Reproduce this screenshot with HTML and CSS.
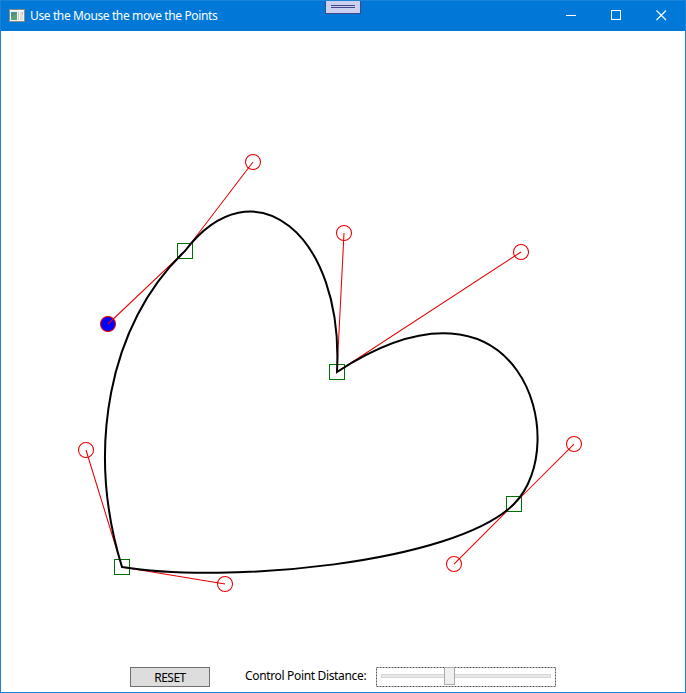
FILE: index.html
```
<!DOCTYPE html>
<html lang="en">
<head>
<meta charset="utf-8">
<title>Use the Mouse the move the Points</title>
<link rel="stylesheet" href="styles.css">
</head>
<body>
<div class="window">
  <header class="titlebar">
    <svg class="app-icon" width="16" height="14" viewBox="0 0 16 14">
      <rect x="0.5" y="1.5" width="15" height="12" fill="#f4f3ef" stroke="#8e8a86"/>
      <path d="M1 2.5H15" stroke="#fff"/>
      <rect x="2" y="4" width="6" height="8" fill="#4b9187"/>
      <path d="M2 9L8 5V12H2Z" fill="#5f9f74"/>
      <path d="M9.5 4V12" stroke="#c9c9c9"/>
      <rect x="11" y="4" width="3" height="8" fill="#deddd9"/>
      <rect x="13" y="4" width="1" height="2" fill="#b8b8b8"/>
    </svg>
    <span class="title">Use the Mouse the move the Points</span>
    <div class="debug-handle"><i></i><i></i></div>
    <div class="controls">
      <svg width="45" height="30"><path d="M16 14.5H26" stroke="#fff" fill="none"/></svg>
      <svg width="45" height="30"><rect x="16.5" y="9.5" width="9" height="9" stroke="#fff" fill="none"/></svg>
      <svg width="45" height="30"><path d="M16.5 9.5L26 19M26 9.5L16.5 19" stroke="#fff" stroke-width="1.1" fill="none"/></svg>
    </div>
  </header>
  <main class="canvas">
    <svg class="drawing" width="684" height="630" viewBox="1 31 684 630">
      <g class="anchors">
        <rect x="177.5" y="243.5" width="15" height="15"/>
        <rect x="329.5" y="364.5" width="15" height="15"/>
        <rect x="506.5" y="496.5" width="15" height="15"/>
        <rect x="114.5" y="559.5" width="15" height="15"/>
      </g>
      <g class="handles">
        <circle cx="253" cy="162" r="7.5"/>
        <circle cx="344" cy="233" r="7.5"/>
        <circle cx="521" cy="252" r="7.5"/>
        <circle cx="574" cy="444" r="7.5"/>
        <circle cx="454" cy="564" r="7.5"/>
        <circle cx="225" cy="584" r="7.5"/>
        <circle cx="86" cy="450" r="7.5"/>
        <circle class="active" cx="108" cy="324" r="7.5"/>
        <path d="M108 324L185 251L253 162"/>
        <path d="M344 233L337 372L521 252"/>
        <path d="M574 444.1L514 504L454 564.1"/>
        <path d="M225 584L122 567L86 450"/>
      </g>
      <path class="curve" d="M185 251C253 162 344 233 337 372C521 252 574 444 514 504C454 564 225 584 122 567C86 450 108 324 185 251Z"/>
    </svg>
    <div class="toolbar">
      <button class="reset">RESET</button>
      <span class="label">Control Point Distance:</span>
      <div class="slider">
        <svg width="180" height="20">
          <rect class="focus" x="0.5" y="0.5" width="179" height="19"/>
          <rect x="5.5" y="7.5" width="169" height="3" fill="#e7eaea" stroke="#d6d6d6"/>
          <rect x="68.5" y="0.5" width="10" height="17" fill="#f0f0f0" stroke="#acacac"/>
        </svg>
      </div>
    </div>
  </main>
</div>
</body>
</html>
```

FILE: styles.css
```
* { box-sizing: border-box; }
body { margin: 0; background: #fff; font-family: "Noto Sans", "Open Sans", sans-serif; font-size: 12px; }
svg { display: block; }
.window { width: 686px; height: 693px; border: 1px solid #1883d7; overflow: hidden; display: flex; flex-direction: column; }
.titlebar { position: relative; height: 30px; flex: none; background: #0078d7; display: flex; align-items: center; padding-left: 8px; color: #fff; }
.app-icon { margin-top: -2px; }
.title { margin-left: 5px; font-size: 12px; line-height: 16px; letter-spacing: -0.38px; white-space: nowrap; }
.controls { margin-left: auto; display: flex; }
.debug-handle { position: absolute; left: 324px; top: -1px; width: 36px; height: 14px; border: 1px solid #3f4885; background: #ccd0f0; display: flex; flex-direction: column; align-items: center; gap: 1px; padding-top: 4px; }
.debug-handle i { width: 24px; height: 1px; background: #3f4885; }
.canvas { flex: 1; display: flex; flex-direction: column; }
.drawing { flex: none; }
.drawing g { fill: none; stroke-width: 1; }
.anchors { stroke: #007000; }
.drawing .handles { stroke: #e60000; stroke-width: 1.05; }
.active { fill: #00f; }
.curve { fill: none; stroke: #000; stroke-width: 2; }
.toolbar { display: flex; align-items: flex-start; padding: 6px 0 0 129px; }
.reset { width: 80px; height: 20px; padding: 1px 0 0; border: 1px solid #707070; background: #ddd; color: #000; font-family: inherit; font-size: 12px; line-height: 18px; letter-spacing: -0.5px; }
.label { width: 131px; margin-left: 35px; line-height: 17px; letter-spacing: -0.34px; white-space: nowrap; }
.slider { width: 180px; height: 20px; }
.focus { fill: none; stroke: #555; stroke-dasharray: 2 1; }
```
